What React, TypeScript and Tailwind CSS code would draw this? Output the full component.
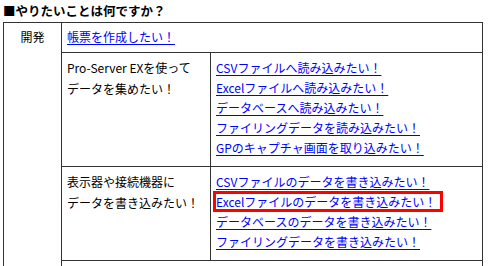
const font = { fontFamily: '"Noto Sans CJK JP", "Noto Sans", sans-serif' };

const readLinks = [
  'CSVファイルへ読み込みたい！',
  'Excelファイルへ読み込みたい！',
  'データベースへ読み込みたい！',
  'ファイリングデータを読み込みたい！',
  'GPのキャプチャ画面を取り込みたい！',
];

const writeLinks = [
  'CSVファイルのデータを書き込みたい！',
  'Excelファイルのデータを書き込みたい！',
  'データベースのデータを書き込みたい！',
  'ファイリングデータを書き込みたい！',
];

const Link = ({ children }: { children: React.ReactNode }) => (
  <a href="#" className="text-[#0000ff] underline underline-offset-2">
    {children}
  </a>
);

const LinkList = ({ items, marked }: { items: string[]; marked?: number }) => (
  <div className="flex-1 pl-[5px] pt-[5px] pb-[8px] leading-[20px]">
    {items.map((text, i) => (
      <div key={text} className="h-[20px] whitespace-nowrap">
        {i === marked ? (
          <span className="relative inline-block">
            <Link>{text}</Link>
            <span className="absolute -left-[3px] -right-[7px] -top-[1px] bottom-0 border-[3px] border-[#ff0000]" />
          </span>
        ) : (
          <Link>{text}</Link>
        )}
      </div>
    ))}
  </div>
);

const Purpose = ({ lines }: { lines: string[] }) => (
  <div className="w-[149px] shrink-0 border-r border-[#333] pl-[5px] pt-[4px] leading-[21px] text-black">
    {lines.map((l) => (
      <div key={l} className="whitespace-nowrap">
        {l}
      </div>
    ))}
  </div>
);

export default function App() {
  return (
    <div className="h-[266px] w-[490px] overflow-hidden bg-white pl-[3px] text-[12px]" style={font}>
      <h1 className="h-[22px] text-[12.5px] font-bold leading-[22px] text-black">■やりたいことは何ですか？</h1>
      <div className="flex w-[480px] border-x border-t border-[#333]">
        <div className="w-[58px] shrink-0 border-r border-[#333] pt-[4px] text-center leading-[20px] text-black">
          開発
        </div>
        <div className="flex flex-1 flex-col">
          <div className="border-b border-[#333] pl-[5px] pt-[4px] pb-[5px] leading-[20px]">
            <Link>帳票を作成したい！</Link>
          </div>
          <div className="flex border-b border-[#333]">
            <Purpose lines={['Pro-Server EXを使って', 'データを集めたい！']} />
            <LinkList items={readLinks} />
          </div>
          <div className="flex border-b border-[#333]">
            <Purpose lines={['表示器や接続機器に', 'データを書き込みたい！']} />
            <LinkList items={writeLinks} marked={1} />
          </div>
          <div className="h-[40px]" />
        </div>
      </div>
    </div>
  );
}
